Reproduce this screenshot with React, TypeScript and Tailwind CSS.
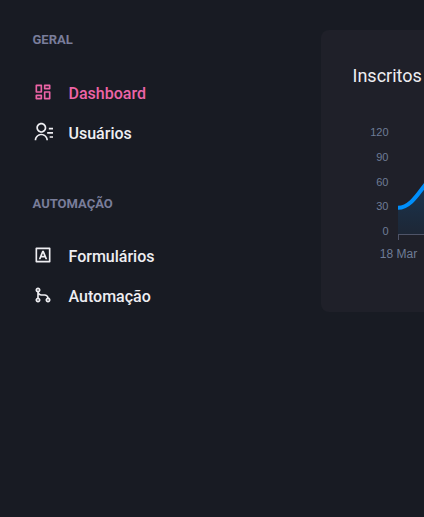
import type { IconType } from "react-icons";
import {
  RiContactsLine,
  RiDashboardLine,
  RiGitMergeLine,
  RiInputMethodLine,
} from "react-icons/ri";

type NavItem = { label: string; icon: IconType; active?: boolean };

function NavSection({ title, items }: { title: string; items: NavItem[] }) {
  return (
    <section>
      <h2 className="text-[13px] leading-5 font-bold text-[#797d9a]">{title}</h2>
      <ul className="mt-[31.5px] flex flex-col gap-4">
        {items.map(({ label, icon: Icon, active }) => (
          <li key={label}>
            <a
              className={`flex h-6 items-center gap-4 font-medium ${
                active ? "text-[#ed64a6]" : "text-[#eeeef2]"
              }`}
            >
              <Icon size={20} className="mb-1 shrink-0" />
              <span className="text-base">{label}</span>
            </a>
          </li>
        ))}
      </ul>
    </section>
  );
}

function Chart() {
  return (
    <svg
      width="430"
      height="160"
      viewBox="0 0 430 160"
      className="shrink-0 font-['Liberation_Sans',Arial,sans-serif]"
    >
      <defs>
        <linearGradient id="area" x1="0" y1="0" x2="0" y2="1">
          <stop offset="0" stopColor="#008ffb" stopOpacity="0.25" />
          <stop offset="1" stopColor="#008ffb" stopOpacity="0.06" />
        </linearGradient>
      </defs>
      <g fill="#6e7c96" fontSize="11" textAnchor="end">
        <text x="35.5" y="26">120</text>
        <text x="35.5" y="51">90</text>
        <text x="35.5" y="76">60</text>
        <text x="35.5" y="100">30</text>
        <text x="35.5" y="125">0</text>
      </g>
      <path d="M45 97.7C57 97.7 65 84 72 75C79 66 85 58 93 48V124H45Z" fill="url(#area)" />
      <path
        d="M45 97.7C57 97.7 65 84 72 75C79 66 85 58 93 48"
        fill="none"
        stroke="#008ffb"
        strokeWidth="4"
      />
      <path d="M45 124.5H430M45.5 124V130" fill="none" stroke="#4f5468" />
      <text x="45.5" y="148" fill="#6e7c96" fontSize="12" textAnchor="middle">
        18 Mar
      </text>
    </svg>
  );
}

export default function App() {
  return (
    <div className="flex h-[517px] w-full gap-6 overflow-hidden bg-[#181b23] pt-[30px] pl-[32.5px] font-[Roboto,sans-serif]">
      <aside className="flex w-64 shrink-0 flex-col gap-12 pr-2">
        <NavSection
          title="GERAL"
          items={[
            { label: "Dashboard", icon: RiDashboardLine, active: true },
            { label: "Usuários", icon: RiContactsLine },
          ]}
        />
        <NavSection
          title="AUTOMAÇÃO"
          items={[
            { label: "Formulários", icon: RiInputMethodLine },
            { label: "Automação", icon: RiGitMergeLine },
          ]}
        />
      </aside>
      <main className="ml-2 h-[282px] w-[480px] shrink-0 rounded-lg bg-[#1f2029] p-8">
        <h1 className="mb-4 text-lg leading-[27px] text-[#eeeef2]">Inscritos</h1>
        <div className="mt-[21px] flex overflow-hidden">
          <Chart />
        </div>
      </main>
    </div>
  );
}
